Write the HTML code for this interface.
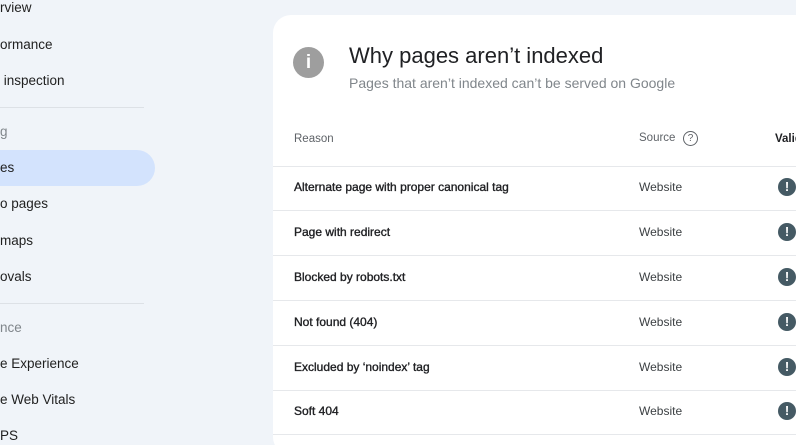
<!DOCTYPE html>
<html style="width:796px;height:445px;overflow:hidden"><head><style>
*{margin:0;padding:0;box-sizing:border-box}
body{width:796px;height:445px;overflow:hidden;background:#f0f4f9;font-family:"Liberation Sans",Arial,sans-serif;position:relative}
.s{position:absolute;left:0;font-size:13.5px;color:#1f1f1f;line-height:16px;white-space:nowrap}
.g{color:#80868b}
.div{position:absolute;left:0;width:144px;height:1px;background:#dde1e6}
.pill{position:absolute;left:-40px;top:150px;width:195px;height:36px;border-radius:18px;background:#d3e3fd}
.card{position:absolute;left:273px;top:15px;width:560px;height:440px;background:#fff;border-radius:18px}
.t{position:absolute;white-space:nowrap}
.line{position:absolute;left:273px;width:523px;height:1px;background:#e6e8eb}
.r{position:absolute;left:294px;font-size:12px;color:#202124;white-space:nowrap;line-height:14px;-webkit-text-stroke:0.35px #202124}
.w{position:absolute;left:639px;font-size:12px;color:#3c4043;line-height:14px}
.ic{position:absolute;left:778px;width:18px;height:18px;border-radius:50%;background:#455a64;color:#fff;font-weight:bold;font-size:13px;text-align:center;line-height:18px}
</style></head><body>
<div class="s" style="top:0">rview</div>
<div class="s" style="top:37px">ormance</div>
<div class="s" style="top:73px">&nbsp;inspection</div>
<div class="div" style="top:107px"></div>
<div class="s g" style="top:124px">g</div>
<div class="pill"></div>
<div class="s" style="top:160px">es</div>
<div class="s" style="top:196px">o pages</div>
<div class="s" style="top:233px">maps</div>
<div class="s" style="top:269px">ovals</div>
<div class="div" style="top:303px"></div>
<div class="s g" style="top:320px">nce</div>
<div class="s" style="top:356px">e Experience</div>
<div class="s" style="top:392px">e Web Vitals</div>
<div class="s" style="top:428px">PS</div>

<div class="card"></div>
<div class="t" style="left:293px;top:47px;width:31px;height:31px;border-radius:50%;background:#9e9e9e;color:#fff;text-align:center;font-weight:bold;font-size:19px;line-height:31px">i</div>
<div class="t" style="left:349px;top:43px;font-size:22px;color:#202124">Why pages aren’t indexed</div>
<div class="t" style="left:349px;top:75px;font-size:14px;color:#80868b">Pages that aren’t indexed can’t be served on Google</div>
<div class="t" style="left:294px;top:133px;font-size:11.5px;color:#5f6368">Reason</div>
<div class="t" style="left:639px;top:132px;font-size:11.5px;color:#5f6368">Source</div>
<div class="t" style="left:683px;top:131px;width:15px;height:15px;border:1.3px solid #5f6368;border-radius:50%;font-size:10px;color:#5f6368;text-align:center;line-height:13px">?</div>
<div class="t" style="left:775px;top:133px;font-size:11.5px;color:#202124;font-weight:bold">Valid</div>
<div class="line" style="top:166px"></div>
<div class="r" style="top:180px">Alternate page with proper canonical tag</div><div class="w" style="top:180px">Website</div><div class="ic" style="top:178px">!</div>
<div class="line" style="top:210px"></div>
<div class="r" style="top:225px">Page with redirect</div><div class="w" style="top:225px">Website</div><div class="ic" style="top:223px">!</div>
<div class="line" style="top:255px"></div>
<div class="r" style="top:270px">Blocked by robots.txt</div><div class="w" style="top:270px">Website</div><div class="ic" style="top:268px">!</div>
<div class="line" style="top:300px"></div>
<div class="r" style="top:315px">Not found (404)</div><div class="w" style="top:315px">Website</div><div class="ic" style="top:313px">!</div>
<div class="line" style="top:345px"></div>
<div class="r" style="top:360px">Excluded by ‘noindex’ tag</div><div class="w" style="top:360px">Website</div><div class="ic" style="top:358px">!</div>
<div class="line" style="top:390px"></div>
<div class="r" style="top:404px">Soft 404</div><div class="w" style="top:404px">Website</div><div class="ic" style="top:402px">!</div>
<div class="line" style="top:434px"></div>
</body></html>
